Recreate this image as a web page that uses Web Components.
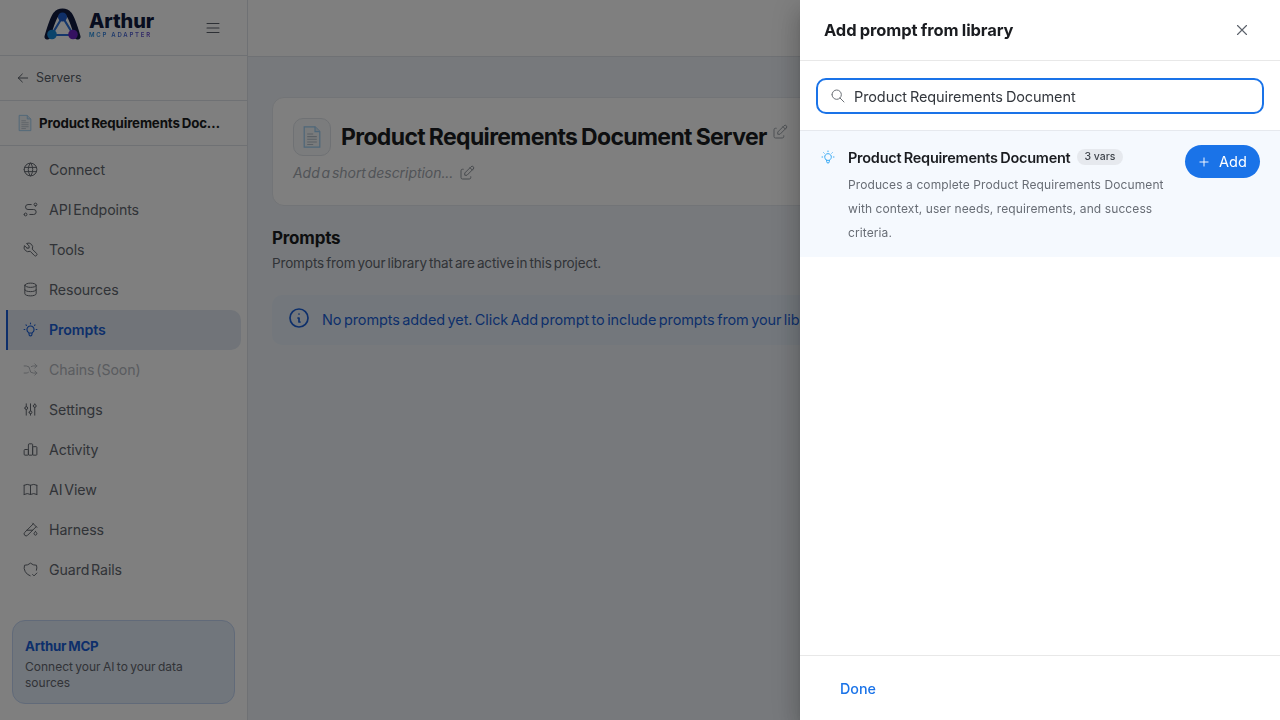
<!DOCTYPE html>
<html lang="en">
<head>
<meta charset="utf-8">
<title>Arthur MCP Adapter</title>
<style>
  html, body { height: 100%; }
  body { margin: 0; overflow: hidden; font-family: Inter, "Liberation Sans", sans-serif; color: #1a1c20; background: #eff3f8; }
</style>
</head>
<body>
<app-shell>
  <side-bar slot="side"></side-bar>
  <server-card slot="main" name="Product Requirements Document Server" placeholder="Add a short description..."></server-card>
  <prompts-section slot="main"></prompts-section>
</app-shell>
<scrim-layer></scrim-layer>
<prompt-drawer></prompt-drawer>

<script>
const ICONS = {
  world: 'M3 12a9 9 0 1 0 18 0a9 9 0 0 0 -18 0M3.6 9h16.8M3.6 15h16.8M11.5 3a17 17 0 0 0 0 18M12.5 3a17 17 0 0 1 0 18',
  route: 'M3 19a2 2 0 1 0 4 0a2 2 0 0 0 -4 0M19 7a2 2 0 1 0 0 -4a2 2 0 0 0 0 4zM11 19h5.5a3.5 3.5 0 0 0 0 -7h-8a3.5 3.5 0 0 1 0 -7h4.5',
  tool: 'M7 10h3v-3l-3.5 -3.5a6 6 0 0 1 8 8l6 6a2 2 0 0 1 -3 3l-6 -6a6 6 0 0 1 -8 -8l3.5 3.5',
  database: 'M4 6a8 3 0 1 0 16 0a8 3 0 1 0 -16 0M4 6v6a8 3 0 0 0 16 0v-6M4 12v6a8 3 0 0 0 16 0v-6',
  bulb: 'M3 12h1m8 -9v1m8 8h1m-15.4 -6.4l.7 .7m12.1 -.7l-.7 .7M9 16a5 5 0 1 1 6 0a3.5 3.5 0 0 0 -1 3a2 2 0 0 1 -4 0a3.5 3.5 0 0 0 -1 -3M9.7 17l4.6 0',
  shuffle: 'M18 4l3 3l-3 3M18 20l3 -3l-3 -3M3 7h3a5 5 0 0 1 5 5a5 5 0 0 0 5 5h5M21 7h-5a4.979 4.979 0 0 0 -3 1m-4 8a4.984 4.984 0 0 1 -3 1h-3',
  sliders: 'M4 10a2 2 0 1 0 4 0a2 2 0 0 0 -4 0M6 4v4M6 12v8M10 16a2 2 0 1 0 4 0a2 2 0 0 0 -4 0M12 4v10M12 18v2M16 7a2 2 0 1 0 4 0a2 2 0 0 0 -4 0M18 4v1M18 9v11',
  chart: 'M3 13a1 1 0 0 1 1 -1h4a1 1 0 0 1 1 1v6a1 1 0 0 1 -1 1h-4a1 1 0 0 1 -1 -1zM15 9a1 1 0 0 1 1 -1h4a1 1 0 0 1 1 1v10a1 1 0 0 1 -1 1h-4a1 1 0 0 1 -1 -1zM9 5a1 1 0 0 1 1 -1h4a1 1 0 0 1 1 1v14a1 1 0 0 1 -1 1h-4a1 1 0 0 1 -1 -1z',
  book: 'M3 19a9 9 0 0 1 9 0a9 9 0 0 1 9 0M3 6a9 9 0 0 1 9 0a9 9 0 0 1 9 0M3 6v13M12 6v13M21 6v13',
  pipe: 'M20 8.04l-12.122 12.124a2.857 2.857 0 1 1 -4.041 -4.04l12.122 -12.124M7 13h8M19 15l1.5 1.6a2 2 0 1 1 -3 0l1.5 -1.6zM15 3l6 6',
  shield: 'M11.46 20.846a12 12 0 0 1 -7.96 -14.846a12 12 0 0 0 8.5 -3a12 12 0 0 0 8.5 3a12 12 0 0 1 -.09 7.06M15 19l2 2l4 -4',
  menu: 'M4 6h16M4 12h16M4 18h16',
  back: 'M5 12h14M5 12l6 6M5 12l6 -6',
  close: 'M18 6l-12 12M6 6l12 12',
  search: 'M3 10a7 7 0 1 0 14 0a7 7 0 1 0 -14 0M21 21l-6 -6',
  info: 'M3 12a9 9 0 1 0 18 0a9 9 0 0 0 -18 0M12 8h.01M11 12h1v4h1',
  edit: 'M7 7h-1a2 2 0 0 0 -2 2v9a2 2 0 0 0 2 2h9a2 2 0 0 0 2 -2v-1M20.385 6.585a2.1 2.1 0 0 0 -2.97 -2.97l-8.415 8.385v3h3l8.385 -8.415zM16 5l3 3',
  plus: 'M12 5v14M5 12h14'
};

function icon(name, size, stroke) {
  return `<svg width="${size}" height="${size}" viewBox="0 0 24 24" fill="none" stroke="currentColor" stroke-width="${stroke || 1.5}" stroke-linecap="round" stroke-linejoin="round" style="display:block;flex:none"><path d="${ICONS[name]}"/></svg>`;
}

// the page emoji, drawn since no emoji font can be counted on
function docGlyph(size) {
  return `<svg width="${size}" height="${size}" viewBox="0 0 20 20" style="display:block;flex:none">
    <path d="M3.5 1.5h9l4 4v13h-13z" fill="#f3f6f9" stroke="#9ccdf2" stroke-width="1"/>
    <path d="M12.5 1.5v4h4" fill="#dbe8f3" stroke="#9ccdf2" stroke-width="1"/>
    <path d="M6 7.5h5M6 9.7h8M6 11.9h8M6 14.1h8M6 16.2h5" stroke="#b4bfc9" stroke-width=".9"/>
  </svg>`;
}

class BaseElement extends HTMLElement {
  constructor() {
    super();
    this.attachShadow({ mode: 'open' });
  }
}

class AppShell extends BaseElement {
  connectedCallback() {
    this.shadowRoot.innerHTML = `
      <style>
        :host { display: grid; grid-template-columns: 248px 1fr; height: 720px; }
        main { display: flex; flex-direction: column; min-width: 0; overflow: hidden; }
        .topbar { height: 56px; flex: none; background: #fff; border-bottom: 1px solid #dfe3e8; }
        .content { padding: 40px 24px 0; display: flex; flex-direction: column; }
      </style>
      <slot name="side"></slot>
      <main>
        <div class="topbar"></div>
        <div class="content"><slot name="main"></slot></div>
      </main>`;
  }
}

class ArthurLogo extends BaseElement {
  connectedCallback() {
    this.shadowRoot.innerHTML = `
      <style>
        :host { display: flex; align-items: center; gap: 7px; margin-bottom: 7px; }
        .words { display: flex; flex-direction: column; }
        .name { font: 800 20px/20px Inter, sans-serif; color: #101a3f; letter-spacing: -.1px; }
        .sub { font: 600 6px/7px Inter, sans-serif; letter-spacing: 1.75px; white-space: nowrap;
               background: linear-gradient(90deg, #1b8fe0, #6a3fc8); -webkit-background-clip: text; background-clip: text; color: transparent; }
      </style>
      <svg width="39" height="33" viewBox="0 0 39 33" style="display:block;flex:none">
        <path d="M4.5 28.500C7 20 10 10 13 6.500 15 4 17 3.500 19.500 3.500S24 4 26 6.500C29 10 32 20 34.500 28.500" fill="none" stroke="#101a3f" stroke-width="6" stroke-linecap="round"/>
        <path d="M19.500 9L8.500 27h22z" fill="none" stroke="#2a6fd8" stroke-width="2.200" stroke-linejoin="round"/>
        <circle cx="19.500" cy="9" r="4.500" fill="#1f5fd0"/>
        <circle cx="9" cy="26.500" r="4.800" fill="#1689d6"/>
        <circle cx="30" cy="26.500" r="4.800" fill="#6a23c2"/>
      </svg>
      <div class="words"><span class="name">Arthur</span><span class="sub">MCP ADAPTER</span></div>`;
  }
}

class NavItem extends BaseElement {
  connectedCallback() {
    const active = this.hasAttribute('active');
    this.shadowRoot.innerHTML = `
      <style>
        :host { display: flex; align-items: center; height: 40px; gap: 10.5px; box-sizing: border-box; padding-bottom: 1px;
                padding-left: 13.5px; font-size: 14.2px; color: #62676f; border-left: 2px solid transparent; margin-left: 6px; margin-right: 6px; letter-spacing: -.1px; word-spacing: -2px; }
        :host([active]) { color: #1b5fd6; font-weight: 600; background: #e2e9f2; border-left-color: #1b5fd6; border-radius: 0 10px 10px 0; }
        :host([disabled]) { color: #b4b8be; }
      </style>
      ${icon(this.getAttribute('icon'), 17, active ? 1.6 : 1.4)}<slot></slot>`;
  }
}

class SideBar extends BaseElement {
  connectedCallback() {
    const items = [
      ['world', 'Connect'], ['route', 'API Endpoints'], ['tool', 'Tools'], ['database', 'Resources'],
      ['bulb', 'Prompts', 'active'], ['shuffle', 'Chains (Soon)', 'disabled'], ['sliders', 'Settings'],
      ['chart', 'Activity'], ['book', 'AI View'], ['pipe', 'Harness'], ['shield', 'Guard Rails']
    ];
    this.shadowRoot.innerHTML = `
      <style>
        :host { display: flex; flex-direction: column; height: 720px; box-sizing: border-box; background: #fff; border-right: 1px solid #dfe3e8; }
        .brand { height: 55px; flex: none; display: flex; align-items: center; border-bottom: 1px solid #dfe3e8; padding-left: 43px; gap: 50px; color: #5b616a; }
        .back { height: 44px; flex: none; display: flex; align-items: center; gap: 5px; padding-left: 15px; font-size: 12.5px; color: #5b616a; border-bottom: 1px solid #dfe3e8; }
        .back span { margin-top: -1px; }
        .server { height: 44px; flex: none; display: flex; align-items: center; gap: 5px; padding: 0 21px 0 16px; font-size: 13.3px; font-weight: 700; color: #1a1c20; border-bottom: 1px solid #dfe3e8; letter-spacing: -.15px; word-spacing: -1px; }
        .server span { white-space: nowrap; overflow: hidden; text-overflow: ellipsis; }
        nav { padding-top: 4px; display: flex; flex-direction: column; }
        .promo { margin: auto 12px 16px; height: 84px; box-sizing: border-box; padding: 15px 12px; border: 1px solid #c2d5f3; border-radius: 13px; background: #e3ecf8; }
        .promo b { display: block; font-size: 13.3px; line-height: 20px; color: #1b5fd6; font-weight: 700; letter-spacing: -.2px; word-spacing: -1px; }
        .promo p { margin: 3px 0 0; font-size: 12px; line-height: 16px; color: #62676f; word-spacing: -1px; }
      </style>
      <div class="brand"><arthur-logo></arthur-logo>${icon('menu', 18, 1.4)}</div>
      <div class="back">${icon('back', 16)}<span>Servers</span></div>
      <div class="server">${docGlyph(18)}<span>Product Requirements Document Server</span></div>
      <nav>${items.map(([ic, label, flag]) => `<nav-item icon="${ic}" ${flag || ''}>${label}</nav-item>`).join('')}</nav>
      <div class="promo"><b>Arthur MCP</b><p>Connect your AI to your data sources</p></div>`;
  }
}

class ServerCard extends BaseElement {
  connectedCallback() {
    this.shadowRoot.innerHTML = `
      <style>
        :host { display: block; width: 1000px; height: 109px; box-sizing: border-box; padding: 20px; background: #fff; border: 1px solid #e4e8ee; border-radius: 12px; }
        .head { display: flex; align-items: center; gap: 10px; }
        .tile { width: 38px; height: 38px; box-sizing: border-box; border: 1px solid #dfe3e8; border-radius: 10px; display: flex; align-items: center; justify-content: center; background: #f6f8fb; }
        h1 { margin: 0; font-size: 23px; line-height: 32px; font-weight: 700; letter-spacing: -.65px; word-spacing: -1px; color: #1a1c20; white-space: nowrap; }
        .pen { color: #9aa0a8; align-self: flex-start; margin: 5px 0 0 -6px; }
        .desc { display: flex; align-items: center; gap: 5px; margin-top: 4px; font-size: 14px; line-height: 26px; font-style: italic; color: #a3a8af; letter-spacing: -.05px; word-spacing: -2px; }
        .desc span { color: #8c9299; }
      </style>
      <div class="head"><div class="tile">${docGlyph(24)}</div><h1>${this.getAttribute('name')}</h1><div class="pen">${icon('edit', 18, 1.3)}</div></div>
      <div class="desc">${this.getAttribute('placeholder')}<span>${icon('edit', 18, 1.3)}</span></div>`;
  }
}

class InfoAlert extends BaseElement {
  connectedCallback() {
    this.shadowRoot.innerHTML = `
      <style>
        :host { display: flex; align-items: center; gap: 11px; width: 1000px; height: 50px; box-sizing: border-box; padding: 0 15px 2px; border-radius: 10px; background: #e6eff9; color: #1b5fd6; font-size: 14.5px; white-space: nowrap; letter-spacing: -.1px; word-spacing: -1.5px; }
        div { margin-top: -2px; }
      </style>
      <div>${icon('info', 24, 1.7)}</div><slot></slot>`;
  }
}

class PromptsSection extends BaseElement {
  connectedCallback() {
    this.shadowRoot.innerHTML = `
      <style>
        :host { display: block; margin-top: 21px; }
        h2 { margin: 0; font-size: 17px; line-height: 22px; font-weight: 700; color: #1a1c20; letter-spacing: -.2px; }
        p { margin: 3px 0 21px; font-size: 13.5px; line-height: 22px; color: #62676f; letter-spacing: -.15px; word-spacing: -1.5px; }
      </style>
      <h2>Prompts</h2>
      <p>Prompts from your library that are active in this project.</p>
      <info-alert>No prompts added yet. Click Add prompt to include prompts from your library.</info-alert>`;
  }
}

class ScrimLayer extends BaseElement {
  connectedCallback() {
    this.shadowRoot.innerHTML = `<style>:host { position: fixed; inset: 0; background: rgba(0, 0, 0, .5); }</style>`;
  }
}

class PromptRow extends BaseElement {
  connectedCallback() {
    this.shadowRoot.innerHTML = `
      <style>
        :host { display: flex; align-items: flex-start; height: 127px; box-sizing: border-box; padding: 14px 20px 0 20px; background: #f5f9fe; border-top: 1px solid #e6e9ee; }
        .bulb { color: #36a9f5; margin-top: 4px; margin-right: 12px; }
        .body { width: 322px; }
        .title { display: flex; align-items: center; gap: 7px; height: 24px; font-size: 14.5px; font-weight: 600; color: #1a1c20; white-space: nowrap; letter-spacing: -.25px; word-spacing: -1px; }
        .badge { height: 16px; line-height: 16px; padding: 0 7px; border-radius: 8px; background: #e6e9ee; font-size: 10.5px; font-weight: 500; color: #41464d; letter-spacing: 0; word-spacing: 0; margin-top: -1px; }
        p { margin: 4px 0 0; font-size: 12px; line-height: 24px; color: #686d75; letter-spacing: .1px; }
        button { margin-left: auto; display: flex; align-items: center; gap: 8px; height: 33px; width: 75px; box-sizing: border-box; padding: 0 0 0 12px; border: 0; border-radius: 17px; background: #1a73e8; color: #fff; font: 400 14.5px Inter, sans-serif; }
      </style>
      <div class="bulb">${icon('bulb', 16)}</div>
      <div class="body">
        <div class="title">Product Requirements Document<span class="badge">3 vars</span></div>
        <p>Produces a complete Product Requirements Document with context, user needs, requirements, and success criteria.</p>
      </div>
      <button>${icon('plus', 14, 1.6)}Add</button>`;
  }
}

class PromptDrawer extends BaseElement {
  connectedCallback() {
    this.shadowRoot.innerHTML = `
      <style>
        :host { position: fixed; top: 0; right: 0; bottom: 0; width: 480px; display: flex; flex-direction: column; background: #fff;
                box-shadow: 0 8px 10px -5px rgba(0,0,0,.2), 0 16px 24px 2px rgba(0,0,0,.14), 0 6px 30px 5px rgba(0,0,0,.12); }
        header { height: 60px; flex: none; display: flex; align-items: center; justify-content: space-between; padding: 0 29px 0 24px; border-bottom: 1px solid #e8e8e8; }
        h2 { margin: 0; font-size: 16.5px; font-weight: 700; color: #1a1c20; letter-spacing: -.1px; word-spacing: -.5px; }
        .x { color: #5b616a; }
        .search { flex: none; padding: 17px 16px 16px; }
        .field { display: flex; align-items: center; gap: 8px; height: 36px; box-sizing: border-box; padding: 0 12px; border: 2px solid #1a73e8; border-radius: 10px; color: #6b7076; }
        input { flex: 1; border: 0; outline: 0; background: none; padding: 0; font: 400 14.5px Inter, sans-serif; color: #33373d; letter-spacing: -.1px; word-spacing: -1px; }
        .list { flex: 1; }
        footer { height: 64px; flex: none; display: flex; align-items: center; padding-left: 40px; border-top: 1px solid #e8e8e8; color: #1a73e8; font-size: 14.3px; font-weight: 500; }
      </style>
      <header><h2>Add prompt from library</h2><div class="x">${icon('close', 18)}</div></header>
      <div class="search"><div class="field">${icon('search', 16)}<input value="Product Requirements Document"></div></div>
      <div class="list"><prompt-row></prompt-row></div>
      <footer>Done</footer>`;
  }
}

customElements.define('arthur-logo', ArthurLogo);
customElements.define('nav-item', NavItem);
customElements.define('side-bar', SideBar);
customElements.define('server-card', ServerCard);
customElements.define('info-alert', InfoAlert);
customElements.define('prompts-section', PromptsSection);
customElements.define('app-shell', AppShell);
customElements.define('scrim-layer', ScrimLayer);
customElements.define('prompt-row', PromptRow);
customElements.define('prompt-drawer', PromptDrawer);
</script>
</body>
</html>
